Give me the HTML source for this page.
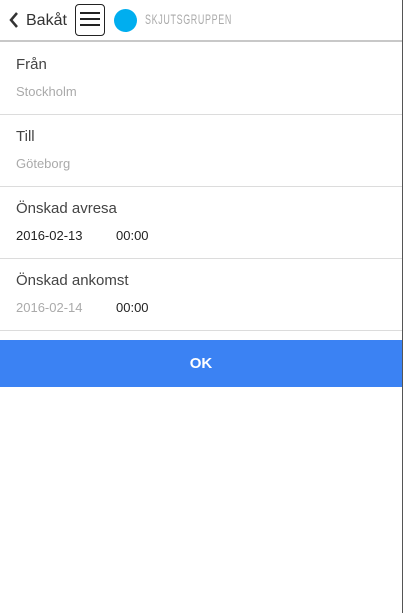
<!DOCTYPE html>
<html><head><style>
body{margin:0;width:404px;height:613px;background:#fff;font-family:"Liberation Sans",sans-serif;position:relative;overflow:hidden}
.vr{position:absolute;left:402px;top:0;width:1px;height:613px;background:#555}
.hdr{position:absolute;left:0;top:0;width:402px;height:40px;border-bottom:2px solid #c8c8c8}
.t{position:absolute;white-space:nowrap}
.line{position:absolute;left:0;width:402px;height:1px;background:#dcdcdc}
.lab{font-size:15px;color:#444}
.val{font-size:13px;color:#aaa}
.dk{color:#222}
</style></head><body>
<div class="hdr">
<svg style="position:absolute;left:8px;top:11px" width="12" height="18"><path d="M9 2 L3 9 L9 16" stroke="#333" stroke-width="2.5" fill="none"/></svg>
<div class="t" style="left:26px;top:12px;font-size:16px;color:#333">Bakåt</div>
<div style="position:absolute;left:75px;top:4px;width:28px;height:30px;border:1px solid #222;border-radius:4px"></div>
<div style="position:absolute;left:80px;top:12px;width:20px;height:2px;background:#222"></div>
<div style="position:absolute;left:80px;top:18px;width:20px;height:2px;background:#222"></div>
<div style="position:absolute;left:80px;top:24px;width:20px;height:2px;background:#222"></div>
<div style="position:absolute;left:114px;top:9px;width:23px;height:23px;border-radius:50%;background:#00aeef"></div>
<div class="t" style="left:145px;top:11px;font-size:14px;color:#aaa;letter-spacing:1px;transform:scaleX(0.64);transform-origin:left">SKJUTSGRUPPEN</div>
</div>
<div class="t lab" style="left:16px;top:56px">Från</div>
<div class="t val" style="left:16px;top:84px">Stockholm</div>
<div class="line" style="top:114px"></div>
<div class="t lab" style="left:16px;top:128px">Till</div>
<div class="t val" style="left:16px;top:156px">Göteborg</div>
<div class="line" style="top:186px"></div>
<div class="t lab" style="left:16px;top:200px">Önskad avresa</div>
<div class="t val dk" style="left:16px;top:228px">2016-02-13</div>
<div class="t val dk" style="left:116px;top:228px">00:00</div>
<div class="line" style="top:258px"></div>
<div class="t lab" style="left:16px;top:272px">Önskad ankomst</div>
<div class="t val" style="left:16px;top:300px">2016-02-14</div>
<div class="t val dk" style="left:116px;top:300px">00:00</div>
<div class="line" style="top:330px"></div>
<div style="position:absolute;left:0;top:340px;width:402px;height:47px;background:#3b82f3;color:#fff;font-size:15px;font-weight:bold;text-align:center;line-height:47px">OK</div>
<div class="vr"></div>
</body></html>
